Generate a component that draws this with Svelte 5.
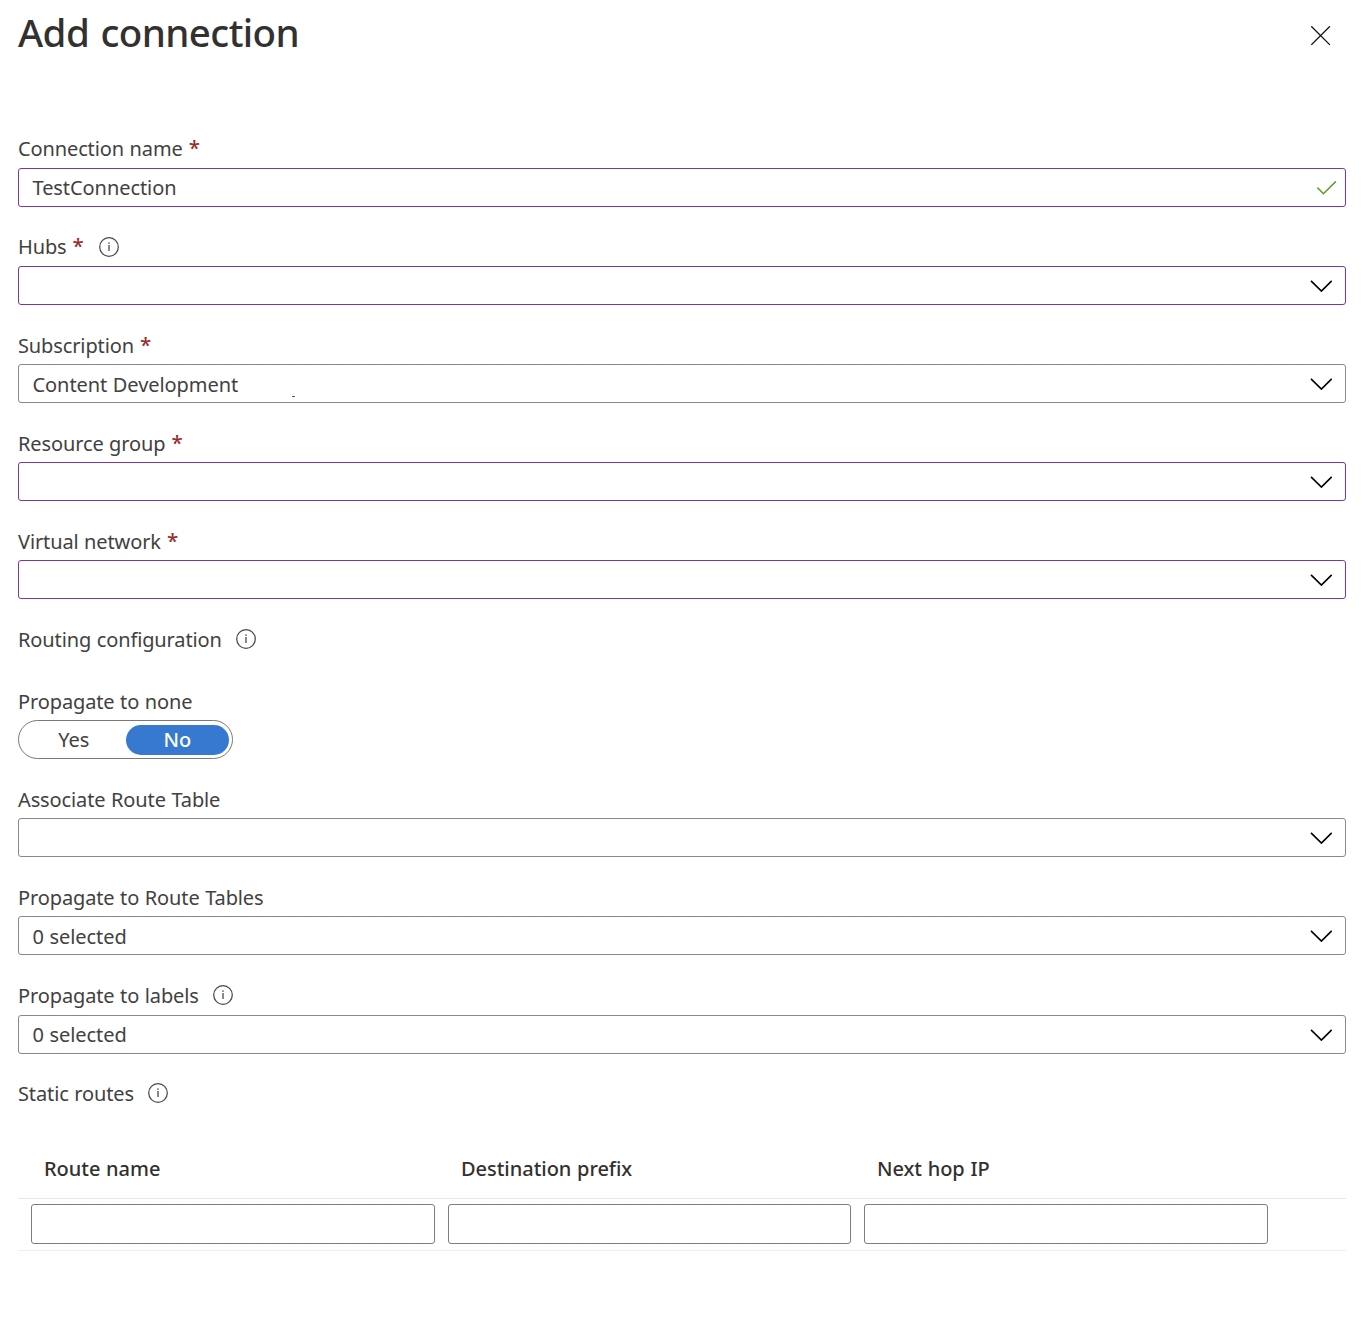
<script>
  const required = [
    { label: 'Connection name', value: 'TestConnection', kind: 'text', active: true },
    { label: 'Hubs', value: '', active: true, info: true },
    { label: 'Subscription', value: 'Content Development', mark: true },
    { label: 'Resource group', value: '', active: true },
    { label: 'Virtual network', value: '', active: true }
  ];
  const routing = [
    { label: 'Associate Route Table', value: '' },
    { label: 'Propagate to Route Tables', value: '0 selected' },
    { label: 'Propagate to labels', value: '0 selected', info: true }
  ];
  const columns = ['Route name', 'Destination prefix', 'Next hop IP'];
  let propagateNone = $state('No');
</script>

{#snippet infoIcon()}
  <svg class="info" width="20" height="20" viewBox="0 0 20 20" aria-hidden="true">
    <circle cx="10" cy="10" r="9.3" fill="none" stroke="#4a4947" stroke-width="1.25" />
    <path d="M10 8v6" stroke="#4a4947" stroke-width="1.3" />
    <circle cx="10" cy="6" r="0.85" fill="#4a4947" />
  </svg>
{/snippet}

{#snippet field(f, isRequired)}
  <div class="field">
    <div class="label">
      <span>{f.label}</span>
      {#if isRequired}<span class="star">*</span>{/if}
      {#if f.info}{@render infoIcon()}{/if}
    </div>
    <div class="box" class:active={f.active}>
      <span class="value">{f.value}{#if f.mark}<i class="mark"></i>{/if}</span>
      {#if f.kind === 'text'}
        <svg class="check" width="20" height="14" viewBox="0 0 20 14" aria-hidden="true">
          <path d="M0.4 6.6L6.4 12.7L18.9 0.4" fill="none" stroke="#5f9e23" stroke-width="1.6" />
        </svg>
      {:else}
        <svg class="chevron" width="22" height="12" viewBox="0 0 22 12" aria-hidden="true">
          <path d="M1 0.9L11.4 11.1L21.7 0.9" fill="none" stroke="#000" stroke-width="1.6" />
        </svg>
      {/if}
    </div>
  </div>
{/snippet}

<main>
  <header>
    <h1>Add connection</h1>
    <button class="close" aria-label="Close">
      <svg width="20" height="20" viewBox="0 0 20 20" aria-hidden="true">
        <path d="M0.3 0.3L18.9 18.9M18.9 0.3L0.3 18.9" stroke="#111" stroke-width="1.3" />
      </svg>
    </button>
  </header>

  {#each required as f}{@render field(f, true)}{/each}

  <div class="label section"><span>Routing configuration</span>{@render infoIcon()}</div>

  <div class="field">
    <div class="label"><span>Propagate to none</span></div>
    <div class="toggle">
      {#each ['Yes', 'No'] as option}
        <button class:on={propagateNone === option} onclick={() => (propagateNone = option)}>{option}</button>
      {/each}
    </div>
  </div>

  {#each routing as f}{@render field(f, false)}{/each}

  <div class="label routes"><span>Static routes</span>{@render infoIcon()}</div>

  <div class="table">
    <div class="row head">
      {#each columns as c}<span>{c}</span>{/each}
    </div>
    <div class="row body">
      {#each columns as c}<input aria-label={c} />{/each}
    </div>
  </div>
</main>

<style>
  :global(body) {
    background: #fff;
  }
  main {
    box-sizing: border-box;
    width: 1369px;
    height: 1341px;
    padding: 0 23px 0 18px;
    color: #42413f;
    font: 20px/39px 'Noto Sans', 'Open Sans', sans-serif;
    letter-spacing: -0.12px;
    word-spacing: 0.5px;
  }
  header {
    display: flex;
    justify-content: space-between;
    align-items: flex-start;
    height: 128.8px;
  }
  h1 {
    margin: 0;
    padding-top: 4px;
    font-size: 38.5px;
    font-weight: 500;
    line-height: 56px;
    letter-spacing: -0.6px;
    word-spacing: 2px;
    color: #323130;
  }
  button {
    border: 0;
    padding: 0;
    background: none;
    font: inherit;
    color: inherit;
    letter-spacing: inherit;
  }
  .close {
    display: flex;
    margin: 26px 15px 0 0;
  }
  .field {
    height: 98.14px;
  }
  .label {
    box-sizing: border-box;
    display: flex;
    align-items: center;
    height: 39.1px;
    white-space: nowrap;
  }
  .field .label {
    padding-top: 0.9px;
  }
  .star {
    width: 11px;
    margin-left: 6px;
    margin-bottom: 2px;
    font-size: 20.5px;
    font-weight: 500;
    color: #962d2b;
  }
  .info {
    flex: none;
    margin-left: 14.5px;
  }
  .star + .info {
    margin-left: 15.7px;
  }
  .box {
    box-sizing: border-box;
    display: flex;
    align-items: center;
    justify-content: space-between;
    height: 39px;
    padding: 0 13px 0 13.5px;
    border: 1px solid #8a8886;
    border-radius: 3px;
    line-height: 37px;
  }
  .box.active {
    border-color: #7b35a5;
  }
  .check {
    margin: 1px -5px 0 0;
  }
  .chevron {
    margin-top: 1px;
  }
  .value {
    position: relative;
    margin-top: 0.9px;
    letter-spacing: -0.07px;
    white-space: nowrap;
  }
  .mark {
    position: absolute;
    left: 259.5px;
    bottom: 6px;
    width: 3px;
    height: 1px;
    background: #555;
  }
  .section {
    height: 61.7px;
    padding-bottom: 22px;
  }
  .toggle {
    box-sizing: border-box;
    display: flex;
    width: 215px;
    height: 39px;
    padding: 4px 3px;
    border: 1px solid #7a7877;
    border-radius: 20px;
  }
  .toggle button {
    width: 104px;
    height: 30px;
    border-radius: 15px;
    line-height: 28px;
    padding-bottom: 1px;
  }
  .toggle .on {
    background: #3779d0;
    color: #fff;
    font-weight: 500;
  }
  .routes {
    height: 39.1px;
  }
  .routes .info {
    margin-left: 14px;
  }
  .table {
    padding-top: 26px;
  }
  .row {
    display: grid;
    grid-template-columns: 404px 403px 404px;
    column-gap: 13px;
    padding-left: 13px;
  }
  .head {
    height: 59px;
    line-height: 59px;
    font-weight: 500;
    letter-spacing: -0.03px;
    color: #323130;
    border-bottom: 1px solid #e8e7e6;
  }
  .head span {
    padding-left: 13px;
  }
  .body {
    padding-top: 5px;
    padding-bottom: 6px;
    border-bottom: 1px solid #efeeed;
  }
  input {
    box-sizing: border-box;
    width: 100%;
    height: 40px;
    border: 1px solid #807e7d;
    border-radius: 3px;
    font: inherit;
  }
</style>
